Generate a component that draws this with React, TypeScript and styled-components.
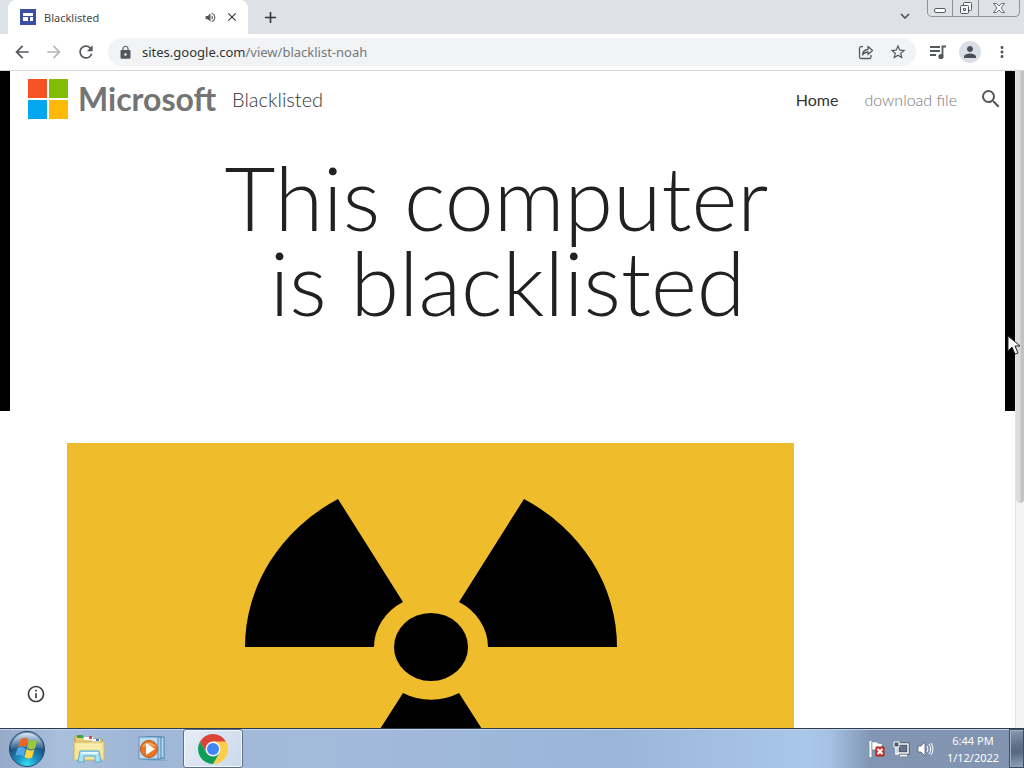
import React from "react";
import styled, { createGlobalStyle } from "styled-components";
import {
  MdArrowBack,
  MdArrowForward,
  MdRefresh,
  MdLock,
  MdStarBorder,
  MdPerson,
  MdMoreVert,
  MdSearch,
  MdClose,
  MdAdd,
  MdVolumeUp,
  MdInfoOutline,
  MdExpandMore,
} from "react-icons/md";

const uiFont = `"Noto Sans", "Open Sans", sans-serif`;

const GlobalStyle = createGlobalStyle`
  * { box-sizing: border-box; }
  body { margin: 0; background: #fff; font-family: ${uiFont}; }
  button { border: 0; padding: 0; background: none; color: inherit; font: inherit; }
`;

const Desktop = styled.div`
  position: relative;
  display: flex;
  flex-direction: column;
  height: 100vh;
  overflow: hidden;
`;

const TabStrip = styled.header`
  display: flex;
  flex: none;
  height: 34px;
  padding-left: 8px;
  background: #dee1e6;
`;

const Tab = styled.div`
  display: flex;
  align-items: center;
  width: 240px;
  padding: 0 2px 0 12px;
  border-radius: 8px 8px 0 0;
  background: #fff;
  color: #45494d;
  font-size: 11px;
`;

const TabTitle = styled.span`
  flex: 1;
  margin-left: 8px;
`;

const IconButton = styled.button<{ $size?: number; $color?: string }>`
  display: flex;
  flex: none;
  align-items: center;
  justify-content: center;
  width: ${(p) => p.$size ?? 32}px;
  height: ${(p) => p.$size ?? 32}px;
  color: ${(p) => p.$color ?? "#54585d"};
`;

const NewTabButton = styled(IconButton)`
  margin-left: 5px;
`;

const StripSpacer = styled.div`
  flex: 1;
`;

const WindowControls = styled.div`
  display: flex;
  height: 17px;
  margin: 0 4px 0 6px;
  border: 1px solid #8d939b;
  border-top: 0;
  border-radius: 0 0 5px 5px;
`;

const WindowButton = styled.button<{ $width: number }>`
  display: flex;
  align-items: center;
  justify-content: center;
  width: ${(p) => p.$width}px;
  & + & {
    border-left: 1px solid #8d939b;
  }
`;

const Toolbar = styled.nav`
  display: flex;
  flex: none;
  align-items: center;
  height: 37px;
  padding: 0 6px;
  border-bottom: 1px solid #d4d6d9;
  background: #fff;
`;

const AddressBar = styled.div`
  display: flex;
  flex: 1;
  align-items: center;
  height: 28px;
  margin: 0 6px;
  padding: 0 2px 0 10px;
  border-radius: 14px;
  background: #f1f3f4;
  color: #54585d;
`;

const Address = styled.div`
  flex: 1;
  margin-left: 9px;
  color: #74787c;
  font-size: 13px;
  b {
    color: #303336;
    font-weight: 400;
  }
`;

const Avatar = styled.button`
  display: flex;
  align-items: center;
  justify-content: center;
  width: 22px;
  height: 22px;
  margin: 0 5px;
  border-radius: 50%;
  background: #dadfe6;
  color: #484e5b;
`;

const Viewport = styled.div`
  position: relative;
  display: flex;
  flex: 1;
  min-height: 0;
`;

const Page = styled.main`
  flex: 1;
  overflow: hidden;
  background: #fff;
  font-family: Lato, sans-serif;
`;

const Hero = styled.section`
  height: 340px;
  border: solid #000;
  border-width: 0 10px;
`;

const SiteHeader = styled.div`
  display: flex;
  align-items: center;
  height: 56px;
  padding: 0 1px 0 18px;
`;

const Tiles = styled.svg`
  flex: none;
`;

const Wordmark = styled.span`
  width: 137px;
  margin-left: 10px;
  color: #747474;
  font: 700 32px/40px Lato, sans-serif;
  white-space: nowrap;
`;

const SiteName = styled.span`
  flex: 1;
  margin-left: 17px;
  color: #333;
  font-size: 20px;
  font-weight: 300;
`;

const NavLink = styled.a<{ $current?: boolean }>`
  margin-right: ${(p) => (p.$current ? 26 : 21)}px;
  color: ${(p) => (p.$current ? "#333" : "#777")};
  font-size: 16px;
  font-weight: ${(p) => (p.$current ? 400 : 300)};
  text-decoration: none;
`;

const Title = styled.h1`
  margin: 28px 0 0;
  color: #212121;
  font-size: 88px;
  font-weight: 300;
  line-height: 85px;
  text-align: center;
`;

const Figure = styled.figure`
  margin: 0;
  padding: 32px 221px 0 67px;
  svg {
    display: block;
    width: 100%;
    background: #efbc2b;
  }
`;

const InfoButton = styled(IconButton)`
  position: absolute;
  left: 26px;
  bottom: 24px;
`;

const ScrollTrack = styled.div`
  flex: none;
  width: 9px;
  border-left: 1px solid #e4e4e4;
  background: #f4f4f4;
`;

const ScrollThumb = styled.div`
  height: 432px;
  border-radius: 0 0 4px 4px;
  background: linear-gradient(90deg, #dcdcdc 0 4px, #c3c3c3 5px);
`;

const Cursor = styled.svg`
  position: absolute;
  top: 335px;
  right: 3px;
`;

const Taskbar = styled.footer`
  display: flex;
  flex: none;
  align-items: stretch;
  height: 40px;
  border-top: 1px solid #2d3a4c;
  background: linear-gradient(90deg, #95a9c8 0, #a9c0dd 60px, #9fb6d7 130px, #a3bbdb 300px, #9ab5d9 60%, #a9c7eb 79%, #a5c1e4 81%, #8296b3 85%, #8193af 100%);
  box-shadow: inset 0 1px 0 #c5d4e8;
`;

const TaskButton = styled.button<{ $active?: boolean; $width: number }>`
  display: flex;
  align-items: center;
  justify-content: center;
  width: ${(p) => p.$width}px;
  border: ${(p) => (p.$active ? "1px solid #5c708b" : "0")};
  border-radius: 3px;
  background: ${(p) => (p.$active ? "linear-gradient(120deg, #e5edf6, #cbd9ea)" : "none")};
  box-shadow: ${(p) => (p.$active ? "inset 0 0 0 1px #f4f8fc" : "none")};
`;

const Tray = styled.div`
  display: flex;
  align-items: center;
  gap: 6px;
  margin-left: auto;
`;

const Clock = styled.time`
  width: 60px;
  margin: 0 6px 0 2px;
  color: #fff;
  font-size: 11px;
  line-height: 17px;
  text-align: center;
  white-space: nowrap;
`;

const ShowDesktop = styled.button`
  width: 15px;
  border: 1px solid #3f4d60;
  background: linear-gradient(170deg, #8c9bb0, #5c6d84 45%, #566980 60%, #8fa3ba);
  box-shadow: inset 1px 1px 0 #a3b1c3;
`;

function StartOrb() {
  return (
    <svg width="38" height="38" viewBox="0 0 38 38">
      <defs>
        <radialGradient id="orb" cx="50%" cy="95%" r="90%">
          <stop offset="0" stopColor="#38e0f4" />
          <stop offset=".35" stopColor="#1a8fbe" />
          <stop offset=".7" stopColor="#1f4f80" />
          <stop offset="1" stopColor="#7fa2c0" />
        </radialGradient>
        <linearGradient id="gloss" x2="0" y2="1">
          <stop offset="0" stopColor="#e4eef6" stopOpacity=".9" />
          <stop offset="1" stopColor="#7da5c7" stopOpacity=".25" />
        </linearGradient>
      </defs>
      <circle cx="19" cy="19" r="17.5" fill="url(#orb)" stroke="#244a6c" />
      <path d="M3 19a16 16 0 0 1 32 0q-16-5-32 0Z" fill="url(#gloss)" />
      <path d="M12.500 9.500q4-3 7.500-.5l-2 8.500q-4-2.500-8-.5Z" fill="#ed6328" />
      <path d="M21 9.500q4 2.500 8.500.5l-2.500 8.500q-4 2-8-.5Z" fill="#9bc83b" />
      <path d="M9.500 18q4-2 8 .5l-2 8q-4-2.500-8-.5Z" fill="#53a9e8" />
      <path d="M18.500 19q4 2.500 8 .5l-2.500 8q-4 2-7.500-.5Z" fill="#ffd23f" />
    </svg>
  );
}

function ExplorerIcon() {
  return (
    <svg width="34" height="32" viewBox="0 0 34 32">
      <path d="M3 3h8l2 3h17v21H3Z" fill="#e9cf72" stroke="#b89e4c" />
      <path d="M5 2h6v3H5Z" fill="#3da34a" />
      <path d="M12 4h9v3h-9Z" fill="#fff" />
      <path d="M17 3h3v3h-3Z" fill="#d84e34" />
      <path d="M20 6h8v3h-8Z" fill="#f5f9fd" />
      <path d="M24 6h3v2h-3Z" fill="#3d82c9" />
      <path d="M2 9h30v18H2Z" fill="#f5e59a" stroke="#cfb869" />
      <path d="M5 12h24M5 15h24" stroke="#fff6c8" />
      <path d="M6 29l2-11h19l2 11h-6v-6H12v6Z" fill="#a9e1f7" stroke="#56a9d5" />
      <path d="M9 20h17" stroke="#e6fbff" strokeWidth="2" />
    </svg>
  );
}

function MediaPlayerIcon() {
  return (
    <svg width="30" height="28" viewBox="0 0 30 28">
      <path d="M10 2h16v21l3 3H10Z" fill="#83acd0" />
      <path d="M8 2h18v21H8Z" fill="#b9dbf0" stroke="#4b83b0" />
      <path d="M5 2h18v22H5Z" fill="#a9cfe9" stroke="#4b83b0" />
      <path d="M1 2h19v22H1Z" fill="#bfdbef" stroke="#5c91ba" />
      <circle cx="11" cy="14" r="8.500" fill="#ec7624" stroke="#bd5414" />
      <path d="M4 12a8 8 0 0 1 14 0q-7-3-14 0Z" fill="#f5a560" />
      <path d="m8 8 9 6-9 6Z" fill="#fff" />
    </svg>
  );
}

function ChromeIcon() {
  return (
    <svg width="32" height="32" viewBox="0 0 32 32">
      <path d="M16 16 3.01 8.5A15 15 0 0 1 28.99 8.5Z" fill="#db4437" />
      <path d="M16 16V8.5h13A15 15 0 0 1 16 31l6.5-11Z" fill="#ffcd46" />
      <path d="M16 16 22.5 19.75 16 31A15 15 0 0 1 3.01 8.5L9.5 19.75Z" fill="#0f9d58" />
      <path d="M3.01 8.5 9.5 19.75 16 16V8.5Z" fill="#db4437" />
      <circle cx="16" cy="16" r="7.5" fill="#f3f6fa" />
      <circle cx="16" cy="16" r="6" fill="#4285f4" />
    </svg>
  );
}

export default function App() {
  return (
    <Desktop>
      <GlobalStyle />
      <TabStrip>
        <Tab>
          <svg width="16" height="16" viewBox="0 0 16 16">
            <path d="M0 0h16v16H0Z" fill="#3d4ea5" />
            <path d="M3 4h10v3H3ZM3 8h5v4H3ZM10 8h3v4h-3Z" fill="#fff" />
          </svg>
          <TabTitle>Blacklisted</TabTitle>
          <IconButton $size={16} aria-label="Mute tab"><MdVolumeUp size={13} /></IconButton>
          <IconButton $size={28} $color="#33373b" aria-label="Close tab"><MdClose size={14} /></IconButton>
        </Tab>
        <NewTabButton $size={34} $color="#33373b" aria-label="New tab"><MdAdd size={19} /></NewTabButton>
        <StripSpacer />
        <IconButton $color="#45494d" aria-label="Search tabs"><MdExpandMore size={18} /></IconButton>
        <WindowControls>
          <WindowButton $width={24} aria-label="Minimize">
            <svg width="14" height="17" viewBox="0 0 14 17"><rect x="1.5" y="8.500" width="11" height="4" rx="1.500" fill="#fff" stroke="#555b63" /></svg>
          </WindowButton>
          <WindowButton $width={26} aria-label="Restore">
            <svg width="14" height="17" viewBox="0 0 14 17" fill="#f4f5f7" stroke="#555b63"><rect x="4.500" y="2.500" width="8" height="8" rx="1" /><rect x="1.500" y="5.500" width="8" height="8" rx="1" /><path d="M4.500 8.500h2v2h-2Z" /></svg>
          </WindowButton>
          <WindowButton $width={41} aria-label="Close">
            <svg width="14" height="17" viewBox="0 0 14 17"><path d="M1.500 3.500h3L7 6l2.500-2.500h3L9 8l3.500 4.500h-3L7 10l-2.500 2.500h-3L5 8Z" fill="#fff" stroke="#666c74" /></svg>
          </WindowButton>
        </WindowControls>
      </TabStrip>

      <Toolbar>
        <IconButton aria-label="Back"><MdArrowBack size={20} /></IconButton>
        <IconButton $color="#b5b7ba" aria-label="Forward"><MdArrowForward size={20} /></IconButton>
        <IconButton aria-label="Reload"><MdRefresh size={20} /></IconButton>
        <AddressBar>
          <MdLock size={15} />
          <Address><b>sites.google.com</b>/view/blacklist-noah</Address>
          <IconButton aria-label="Share">
            <svg width="16" height="16" viewBox="0 0 16 16" fill="none" stroke="currentColor" strokeWidth="1.300" strokeLinejoin="round">
              <path d="M5 2.700H3A1.500 1.500 0 0 0 1.500 4.200V13A1.500 1.500 0 0 0 3 14.500h8.500A1.500 1.500 0 0 0 13 13v-2M4.500 11q.5-5.500 5.500-5.500V2.500l4.500 4-4.500 4V8q-3.500 0-5.500 3Z" />
            </svg>
          </IconButton>
          <IconButton aria-label="Bookmark"><MdStarBorder size={18} /></IconButton>
        </AddressBar>
        <IconButton aria-label="Media controls">
          <svg width="18" height="16" viewBox="0 0 18 16" fill="none" stroke="currentColor" strokeWidth="1.800">
            <path d="M1 3h10M1 7h10M1 11h6M13.500 12V2.500H17" /><circle cx="12" cy="12.500" r="1.700" fill="currentColor" />
          </svg>
        </IconButton>
        <Avatar aria-label="Profile"><MdPerson size={18} /></Avatar>
        <IconButton aria-label="Menu"><MdMoreVert size={18} /></IconButton>
      </Toolbar>

      <Viewport>
        <Page>
          <Hero>
            <SiteHeader>
              <Tiles width="40" height="40" viewBox="0 0 40 40">
                <path d="M0 0h19v19H0Z" fill="#f35325" />
                <path d="M21 0h19v19H21Z" fill="#81bc06" />
                <path d="M0 21h19v19H0Z" fill="#05a6f0" />
                <path d="M21 21h19v19H21Z" fill="#ffba08" />
              </Tiles>
              <Wordmark>Microsoft</Wordmark>
              <SiteName>Blacklisted</SiteName>
              <NavLink href="#home" $current>Home</NavLink>
              <NavLink href="#download">download file</NavLink>
              <IconButton $size={26} aria-label="Search"><MdSearch size={24} /></IconButton>
            </SiteHeader>
            <Title>This computer&nbsp;<br />is blacklisted</Title>
          </Hero>
          <Figure>
            <svg viewBox="0 0 727 409" role="img" aria-label="Radiation warning">
              <path d="M178 204A186 171 0 0 1 271 56L336 159A57 52 0 0 0 307 204Z" />
              <path d="M550 204A186 171 0 0 0 457 56L392 159A57 52 0 0 1 421 204Z" />
              <path d="M336 250A57 52 0 0 0 392 250L457 352A186 171 0 0 1 271 352Z" />
              <ellipse cx="364" cy="204" rx="37" ry="34" />
            </svg>
          </Figure>
        </Page>
        <ScrollTrack><ScrollThumb /></ScrollTrack>
        <InfoButton $size={20} $color="#3c3f43" aria-label="Page information"><MdInfoOutline size={20} /></InfoButton>
      </Viewport>

      <Taskbar>
        <TaskButton $width={54} aria-label="Start"><StartOrb /></TaskButton>
        <TaskButton $width={69} aria-label="Explorer"><ExplorerIcon /></TaskButton>
        <TaskButton $width={60} aria-label="Media Player"><MediaPlayerIcon /></TaskButton>
        <TaskButton $width={60} $active aria-label="Chrome"><ChromeIcon /></TaskButton>
        <Tray>
          <svg width="18" height="18" viewBox="0 0 18 18">
            <path d="M1.500 1v16" stroke="#fff" strokeWidth="2" />
            <path d="M3 2q4-1 6 1 2 1 4 0v8q-3 1-4 0-3-2-6-1Z" fill="#fff" stroke="#5a6677" strokeWidth=".5" />
            <path d="M7 7h8v9H7Z" fill="#d93e32" stroke="#9e231d" strokeLinejoin="round" />
            <path d="m8.500 9 5 5m0-5-5 5" stroke="#fff" strokeWidth="1.800" />
          </svg>
          <svg width="18" height="18" viewBox="0 0 18 18">
            <path d="M5 4h10v9H5Z" fill="#66758b" stroke="#3a4555" strokeWidth="3" />
            <path d="M5 4h10v9H5ZM7 15.500h7M3 7v7h3" fill="none" stroke="#fff" strokeWidth="1.500" />
            <path d="M1 2h5v5H1Z" fill="#4b586a" stroke="#fff" />
          </svg>
          <svg width="18" height="18" viewBox="0 0 18 18" fill="none" stroke="#fff">
            <path d="M1 6h3l4-4v14l-4-4H1Z" fill="#fff" stroke="#4c5869" strokeWidth=".7" />
            <path d="M10 6q2 3 0 6M12 4q3.500 5 0 10M14 3q4 6 0 12" />
          </svg>
          <Clock>6:44 PM<br />1/12/2022</Clock>
        </Tray>
        <ShowDesktop aria-label="Show desktop" />
      </Taskbar>
      <Cursor width="14" height="20" viewBox="0 0 14 20">
        <path d="M1 1v15l4-4 3 7 3-1-3-7h5Z" fill="#fff" stroke="#222" />
      </Cursor>
    </Desktop>
  );
}
